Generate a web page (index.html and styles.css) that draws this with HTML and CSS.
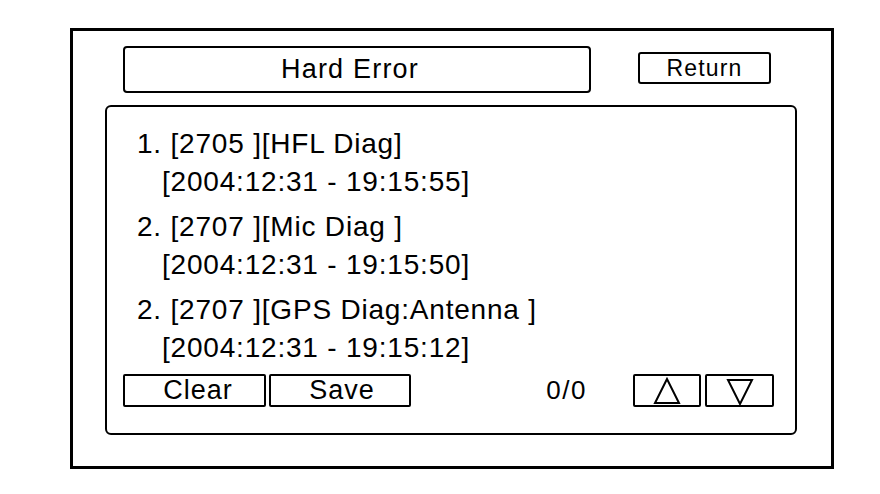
FILE: index.html
```html
<!DOCTYPE html>
<html>
<head>
<meta charset="utf-8">
<link rel="stylesheet" href="styles.css">
</head>
<body>
<div class="frame">
  <div class="top-row">
    <div class="title-box">Hard Error</div>
    <div class="return-btn">Return</div>
  </div>
  <div class="list-box">
    <div class="entries">
      <div class="entry">
        <div class="line">1. [2705 ][HFL Diag]</div>
        <div class="line sub">[2004:12:31 - 19:15:55]</div>
      </div>
      <div class="entry">
        <div class="line">2. [2707 ][Mic Diag ]</div>
        <div class="line sub">[2004:12:31 - 19:15:50]</div>
      </div>
      <div class="entry">
        <div class="line">2. [2707 ][GPS Diag:Antenna ]</div>
        <div class="line sub">[2004:12:31 - 19:15:12]</div>
      </div>
    </div>
    <div class="bottom-row">
      <div class="btn btn-clear">Clear</div>
      <div class="btn btn-save">Save</div>
      <div class="count">0/0</div>
      <div class="btn arrow-btn arrow-up">
        <svg width="28" height="28" viewBox="0 0 28 28"><polygon points="14,2 2,26 26,26" fill="none" stroke="#000" stroke-width="2"/></svg>
      </div>
      <div class="btn arrow-btn arrow-down">
        <svg width="28" height="28" viewBox="0 0 28 28"><polygon points="2,3 26,3 14,27" fill="none" stroke="#000" stroke-width="2"/></svg>
      </div>
    </div>
  </div>
</div>
</body>
</html>
```

FILE: styles.css
```css
html, body {
  margin: 0;
  padding: 0;
  background: #fff;
}
body {
  font-family: "Liberation Sans", Arial, sans-serif;
  color: #000;
}
.frame {
  box-sizing: border-box;
  margin: 28px 0 0 70px;
  width: 764px;
  height: 441px;
  border: 3px solid #000;
  padding: 15px 0 0 32px;
}
.top-row {
  display: flex;
  align-items: flex-start;
}
.title-box {
  box-sizing: border-box;
  margin-left: 18px;
  width: 468px;
  height: 47px;
  border: 2px solid #000;
  border-radius: 4px;
  display: flex;
  align-items: center;
  justify-content: center;
  font-size: 27px;
  letter-spacing: 1.2px;
  padding-right: 14px;
}
.return-btn {
  box-sizing: border-box;
  margin: 6px 0 0 47px;
  width: 133px;
  height: 32px;
  border: 2px solid #000;
  border-radius: 3px;
  display: flex;
  align-items: center;
  justify-content: center;
  font-size: 23px;
  letter-spacing: 1.2px;
}
.list-box {
  box-sizing: border-box;
  margin-top: 12px;
  width: 692px;
  height: 330px;
  border: 2px solid #000;
  border-radius: 6px;
  padding: 18px 21px 0 16px;
}
.entries {
  padding-left: 14px;
}
.entry {
  margin-bottom: 7px;
}
.line {
  height: 38px;
  line-height: 38px;
  font-size: 28px;
  letter-spacing: 0.8px;
  white-space: pre;
}
.line.sub {
  padding-left: 25px;
}
.bottom-row {
  display: flex;
  align-items: center;
  margin-top: 1px;
}
.btn {
  box-sizing: border-box;
  height: 33px;
  border: 2px solid #000;
  border-radius: 2px;
  display: flex;
  align-items: center;
  justify-content: center;
  font-size: 27px;
  letter-spacing: 1px;
}
.btn-clear {
  width: 143px;
  padding-left: 7px;
}
.btn-save {
  width: 142px;
  margin-left: 3px;
  padding-left: 4px;
}
.count {
  margin-left: auto;
  margin-right: 46px;
  font-size: 26px;
  letter-spacing: 1.5px;
}
.arrow-btn {
  width: 68px;
}
.arrow-down {
  width: 69px;
  margin-left: 4px;
}
.arrow-btn svg {
  display: block;
}
```
